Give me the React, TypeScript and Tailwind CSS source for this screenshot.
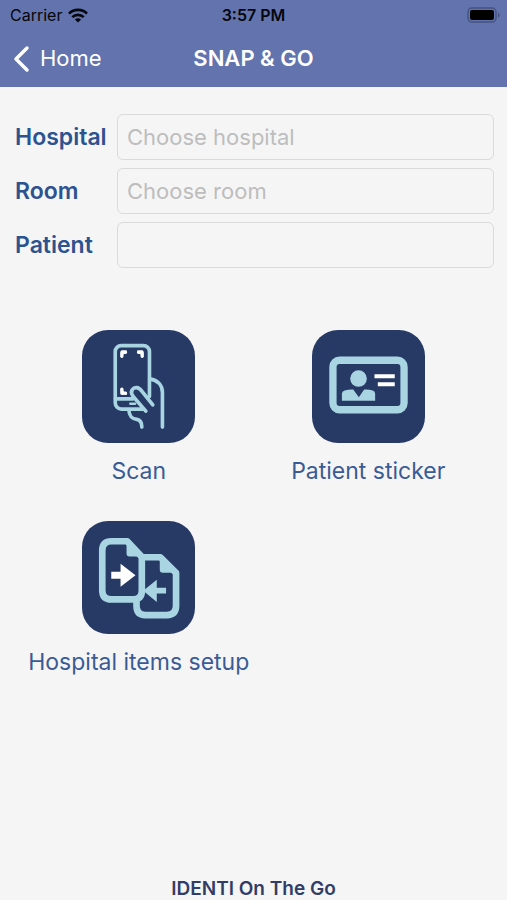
import type { ReactNode } from 'react';

interface Field {
  id: string;
  label: string;
  placeholder?: string;
}

const fields: Field[] = [
  { id: 'hospital', label: 'Hospital', placeholder: 'Choose hospital' },
  { id: 'room', label: 'Room', placeholder: 'Choose room' },
  { id: 'patient', label: 'Patient' },
];

function WifiIcon() {
  return (
    <svg viewBox="0 0 20 15" className="h-[15px] w-5" aria-hidden="true">
      <g fill="none" stroke="#05070d" strokeWidth="2.7">
        <path d="M1 5.6C6 .7 14 .7 19 5.6" />
        <path d="M4.3 9.1c3.2-3.1 8.2-3.1 11.4 0" />
      </g>
      <path d="M10 14.6 6.9 11.5c1.7-1.6 4.5-1.6 6.200 0z" fill="#05070d" />
    </svg>
  );
}

function BatteryIcon() {
  return (
    <svg viewBox="0 0 34 16" className="h-4 w-[34px]" aria-hidden="true">
      <rect x="1" y="1" width="28" height="14" rx="4" fill="none" stroke="#46527f" strokeWidth="1.4" />
      <rect x="3" y="3" width="24" height="10" rx="2" fill="#000" />
      <path d="M31 5.5c2 .8 2 4.2 0 5z" fill="#46527f" />
    </svg>
  );
}

function ScanIcon() {
  return (
    <svg viewBox="0 0 340 340" className="size-full" fill="none" strokeLinecap="round" strokeLinejoin="round" aria-hidden="true">
      <g stroke="#a9d5e3" strokeWidth="11">
        <path d="M203 200V65a18 18 0 0 0-18-18H118a18 18 0 0 0-18 18V219a19 19 0 0 0 19 19H183" />
        <path d="M101 207H154" />
        <path d="M145 222H160" strokeWidth="7" />
        <path d="M213 225 180 184C170 170 157 171 151 180C146 188 149 194 154 200L192 244" />
        <path d="M204 147C228 151 242 166 242 188V292" />
        <path d="M141 240C142 261 150 267 165 269C176 271 180 279 180 292" />
      </g>
      <g stroke="#fff" strokeWidth="10">
        <path d="M120 79V67H131" />
        <path d="M170 67H181V79" />
        <path d="M120 178V190H131" />
      </g>
      <path d="M118 62h18l-20 20zM183 62h-18l20 20zM118 195h18l-20-20z" fill="#fff" />
    </svg>
  );
}

function StickerIcon() {
  return (
    <svg viewBox="0 0 340 340" className="size-full" fill="none" aria-hidden="true">
      <rect x="63" y="91" width="214" height="149" rx="20" stroke="#a9d5e3" strokeWidth="22" />
      <circle cx="140" cy="146" r="25" fill="#a9d5e3" />
      <path d="M90 213V192Q90 184 98 182Q112 178 124 179L141 202L157 179Q171 178 183 182Q190 184 190 192V213Z" fill="#a9d5e3" />
      <path d="M188 139H249M198 163H249" stroke="#fff" strokeWidth="12" />
    </svg>
  );
}

function ItemsIcon() {
  return (
    <svg viewBox="0 0 340 340" className="size-full" fill="none" strokeLinejoin="round" aria-hidden="true">
      <g stroke="#a9d5e3" strokeWidth="20">
        <path d="M180 108 136 61H89Q61 61 61 89V208Q61 236 89 236H154Q180 236 180 210Z" />
        <path d="M180 109H236L283 156V255Q283 283 255 283H190Q164 283 164 255V234" />
      </g>
      <path d="M134 56V98Q134 107 143 107H184ZM234 104V147Q234 156 243 156H287Z" fill="#a9d5e3" />
      <path d="M88 153H116V129L161 163L116 198V174H88Z" fill="#fff" />
      <path d="M253 201H225V177L184 210L225 244V218H253Z" fill="#a9d5e3" />
    </svg>
  );
}

function Tile({ label, children }: { label: string; children: ReactNode }) {
  return (
    <button type="button" className="flex flex-col items-center gap-3">
      <span className="size-[113px] overflow-hidden rounded-[26px] bg-[#273a66]">{children}</span>
      <span className="text-[23px] leading-8 whitespace-nowrap text-[#3a5b96]">{label}</span>
    </button>
  );
}

export default function App() {
  return (
    <div className="flex min-h-screen flex-col bg-[#f5f5f5] font-['Inter','Liberation_Sans',sans-serif]">
      <header className="bg-[#6273ad]">
        <div className="grid h-[30px] grid-cols-3 items-center px-1.5 text-base text-[#05070d]">
          <div className="flex items-center gap-1.5">
            <span className="pl-1">Carrier</span>
            <WifiIcon />
          </div>
          <span className="text-center font-semibold">3:57 PM</span>
          <div className="flex justify-end">
            <BatteryIcon />
          </div>
        </div>
        <div className="grid h-[57px] grid-cols-3 items-center px-3 text-[22px] text-white">
          <a href="#home" className="flex items-center gap-2.5">
            <svg viewBox="0 0 18 28" className="h-7 w-[18px]" fill="none" aria-hidden="true">
              <path d="M15 3 4 14 15 25" stroke="#fff" strokeWidth="3.5" strokeLinecap="round" strokeLinejoin="round" />
            </svg>
            <span>Home</span>
          </a>
          <h1 className="text-center font-semibold whitespace-nowrap">SNAP &amp; GO</h1>
        </div>
      </header>

      <main className="flex-1">
        <form className="flex flex-col gap-2 pt-[27px] pr-[13px] pl-[15px]">
          {fields.map((field) => (
            <div key={field.id} className="grid grid-cols-[102px_1fr] items-center">
              <label htmlFor={field.id} className="text-[23px] font-semibold text-[#2d5290]">
                {field.label}
              </label>
              <input
                id={field.id}
                type="text"
                placeholder={field.placeholder}
                className="h-[46px] w-full min-w-0 rounded-md border border-[#dadada] bg-transparent px-[9px] text-[22px] text-[#2d5290] placeholder:text-[#bdbdbd]"
              />
            </div>
          ))}
        </form>

        <div className="grid grid-cols-2 gap-y-[34px] px-6 pt-[62px]">
          <Tile label="Scan">
            <ScanIcon />
          </Tile>
          <Tile label="Patient sticker">
            <StickerIcon />
          </Tile>
          <Tile label="Hospital items setup">
            <ItemsIcon />
          </Tile>
        </div>
      </main>

      <footer className="text-center text-[19px] leading-[22px] font-semibold text-[#323c66]">IDENTI On The Go</footer>
    </div>
  );
}
